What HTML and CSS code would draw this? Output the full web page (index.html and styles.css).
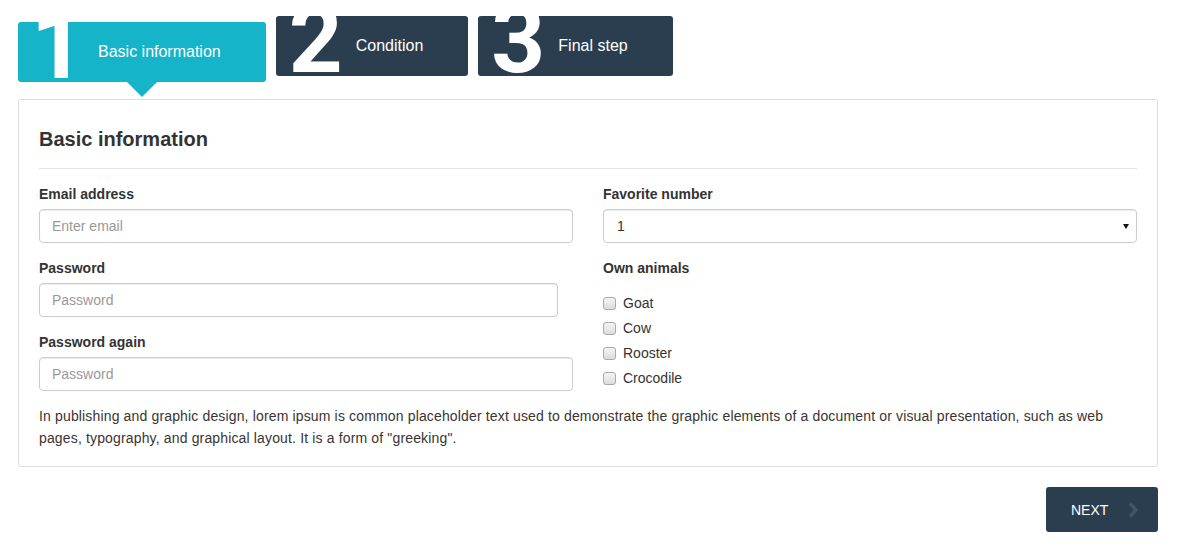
FILE: index.html
```html
<!DOCTYPE html>
<html lang="en">
<head>
<meta charset="utf-8">
<title>Wizard</title>
<link rel="stylesheet" href="styles.css">
</head>
<body>
<div class="page">
  <div class="steps">
    <div class="step active"><span class="num">1</span><span class="label">Basic information</span></div>
    <div class="step"><span class="num">2</span><span class="label">Condition</span></div>
    <div class="step"><span class="num">3</span><span class="label">Final step</span></div>
  </div>
  <div class="panel">
    <h3 class="title">Basic information</h3>
    <div class="divider"></div>
    <div class="cols">
      <div class="col">
        <div class="group">
          <label class="lbl">Email address</label>
          <input class="ctrl" type="text" placeholder="Enter email">
        </div>
        <div class="group">
          <label class="lbl">Password</label>
          <input class="ctrl narrow" type="password" placeholder="Password">
        </div>
        <div class="group">
          <label class="lbl">Password again</label>
          <input class="ctrl" type="password" placeholder="Password">
        </div>
      </div>
      <div class="col">
        <div class="group">
          <label class="lbl">Favorite number</label>
          <div class="select-wrap">
            <select class="ctrl sel"><option>1</option><option>2</option><option>3</option></select>
            <span class="caret"></span>
          </div>
        </div>
        <div class="group">
          <label class="lbl">Own animals</label>
          <div class="checks">
            <label class="check"><input type="checkbox" class="cb"><span>Goat</span></label>
            <label class="check"><input type="checkbox" class="cb"><span>Cow</span></label>
            <label class="check"><input type="checkbox" class="cb"><span>Rooster</span></label>
            <label class="check"><input type="checkbox" class="cb"><span>Crocodile</span></label>
          </div>
        </div>
      </div>
    </div>
    <p class="desc">In publishing and graphic design, lorem ipsum is common placeholder text used to demonstrate the graphic elements of a document or visual presentation, such as web pages, typography, and graphical layout. It is a form of "greeking".</p>
  </div>
  <div class="actions">
    <button class="next" type="button"><span>NEXT</span>
      <svg width="10" height="16" viewBox="0 0 10 16"><path d="M2 1.5 L8 8 L2 14.5" fill="none" stroke="#415569" stroke-width="3.4"/></svg>
    </button>
  </div>
</div>
</body>
</html>
```
FILE: styles.css
```css
* { box-sizing: border-box; }
html, body { margin: 0; padding: 0; background: #fff; }
body {
  font-family: "Liberation Sans", Arial, sans-serif;
  font-size: 14px;
  line-height: 20px;
  color: #333;
}
.page { padding: 16px 24px 0 18px; }

.steps { display: flex; align-items: flex-start; gap: 10px; }
.step {
  position: relative;
  display: flex;
  align-items: center;
  height: 60px;
  background: #2b3e50;
  border-radius: 3px;
  color: #fff;
}
.step.active { background: #16b4c9; margin-top: 6px; }
.step.active::after {
  content: "";
  position: absolute;
  left: 109px;
  top: 60px;
  border-left: 15px solid transparent;
  border-right: 15px solid transparent;
  border-top: 15px solid #16b4c9;
}
.num {
  display: block;
  width: 80px;
  height: 60px;
  padding-left: 13px;
  overflow: hidden;
  font-family: Roboto, "Liberation Sans", sans-serif;
  font-size: 94px;
  font-weight: bold;
  line-height: 48px;
  color: #fff;
}
.label { font-size: 16px; padding-right: 45px; white-space: nowrap; }

.panel {
  margin-top: 17px;
  border: 1px solid #ddd;
  border-radius: 3px;
  padding: 20px 20px 17px;
}
.title {
  margin: 8px 0 0;
  font-size: 20px;
  line-height: 22px;
  font-weight: bold;
  color: #333;
}
.divider { height: 1px; background: #e3e3e3; margin: 18px 0 15px; }
.cols { display: flex; gap: 30px; }
.col { flex: 1; min-width: 0; }
.group { margin-bottom: 15px; }
.lbl { display: block; font-weight: bold; margin-bottom: 5px; }
.ctrl {
  display: block;
  width: 100%;
  height: 34px;
  padding: 6px 12px;
  font-family: inherit;
  font-size: 14px;
  color: #555;
  background: #fff;
  border: 1px solid #ccc;
  border-radius: 4px;
  box-shadow: inset 0 1px 1px rgba(0,0,0,0.075);
  outline: none;
}
.ctrl::placeholder { color: #999; }
.ctrl.narrow { width: 519px; }
.select-wrap { position: relative; }
.sel { appearance: none; -webkit-appearance: none; padding-left: 13px; color: #333; }
.caret {
  position: absolute;
  right: 8px;
  top: 15px;
  border-left: 3px solid transparent;
  border-right: 3px solid transparent;
  border-top: 5px solid #111;
}
.checks { display: flex; flex-direction: column; gap: 5px; padding-top: 10px; }
.check { display: flex; align-items: center; height: 20px; font-weight: normal; }
.cb {
  appearance: none;
  -webkit-appearance: none;
  width: 13px;
  height: 13px;
  margin: 0 7px 0 0;
  border: 1px solid #a9a9a9;
  border-radius: 3px;
  background: linear-gradient(#f4f4f4, #dcdcdc);
}
.desc { margin: -1px 0 0; line-height: 22px; letter-spacing: 0.15px; color: #3a3432; }

.actions { display: flex; justify-content: flex-end; padding-top: 20px; }
.next {
  display: flex;
  align-items: center;
  gap: 20px;
  width: 112px;
  height: 45px;
  padding: 0 0 0 25px;
  border: 0;
  border-radius: 3px;
  background: #2b3e50;
  color: #fff;
  font-family: inherit;
  font-size: 14px;
  cursor: pointer;
}
```
